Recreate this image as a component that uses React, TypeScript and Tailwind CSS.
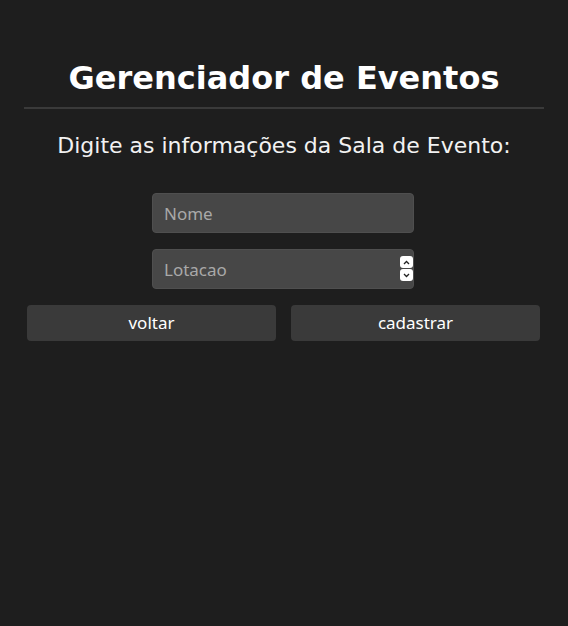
import React from 'react';

const Spinner: React.FC = () => (
  <div className="pointer-events-none absolute right-[1px] top-[7px] flex flex-col gap-[1px]">
    <div className="flex h-[12px] w-[13px] items-center justify-center rounded-[3px] bg-white">
      <svg width="7" height="5" viewBox="0 0 7 5" fill="none">
        <path d="M1 4 L3.5 1.5 L6 4" stroke="#222" strokeWidth="1.3" />
      </svg>
    </div>
    <div className="flex h-[12px] w-[13px] items-center justify-center rounded-[3px] bg-white">
      <svg width="7" height="5" viewBox="0 0 7 5" fill="none">
        <path d="M1 1 L3.5 3.5 L6 1" stroke="#222" strokeWidth="1.3" />
      </svg>
    </div>
  </div>
);

const inputCls =
  'h-10 w-[262px] rounded-[4px] border border-[#4f4f4f] bg-[#474747] px-[11px] text-[17px] text-white placeholder:text-[#a9a9a9] outline-none';

const App: React.FC = () => {
  return (
    <div className="min-h-[626px] bg-[#1e1e1e] text-white" style={{ fontFamily: '"DejaVu Sans", sans-serif' }}>
      <div className="mx-6 pt-[58px]">
        <h1 className="text-center text-[32px] font-bold leading-[40px]">Gerenciador de Eventos</h1>
        <div className="mt-[9px] h-[2px] bg-[#3a3a3a]" />
        <p className="mt-[23px] text-center text-[22px] leading-[28px] text-[#f2f2f2]">
          Digite as informações da Sala de Evento:
        </p>
        <div className="mt-[33px] flex flex-col items-center gap-4 pr-[2px] font-[system-ui]">
          <input type="text" placeholder="Nome" className={inputCls} />
          <div className="relative">
            <input
              type="number"
              placeholder="Lotacao"
              className={`${inputCls} [appearance:textfield] [&::-webkit-inner-spin-button]:appearance-none [&::-webkit-outer-spin-button]:appearance-none`}
            />
            <Spinner />
          </div>
        </div>
        <div className="mt-4 flex gap-[15px] pl-[3px] pr-[4px] font-[system-ui]">
          <button className="h-9 flex-1 rounded-[4px] bg-[#3a3a3a] text-[17px] text-white">voltar</button>
          <button className="h-9 flex-1 rounded-[4px] bg-[#3a3a3a] text-[17px] text-white">cadastrar</button>
        </div>
      </div>
    </div>
  );
};

export default App;
